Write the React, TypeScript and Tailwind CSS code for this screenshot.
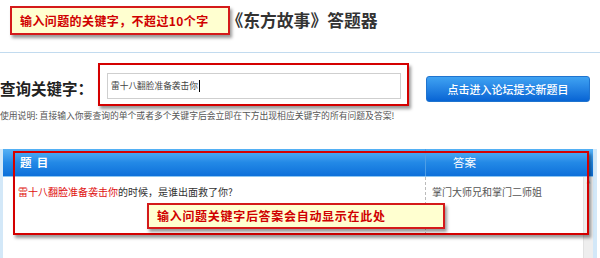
export default function App() {
  return (
    <div className="relative w-[600px] h-[258px] overflow-hidden bg-white font-['Noto_Sans_CJK_SC','Noto_Sans',sans-serif]">
      {/* header */}
      <div className="h-[53px] border-b border-[#c2dbef] flex justify-center pt-[10px] pl-[4px]">
        <div className="text-[16.8px] leading-[20px] font-bold text-[#333]">《东方故事》答题器</div>
      </div>

      {/* search row */}
      <div className="flex mt-[10px] h-[44px]">
        <div className="self-start mt-[16px] w-[98px] text-[15.5px] leading-[18px] font-bold text-[#222]">查询关键字：</div>
        <div className="self-start w-[311px] h-[43px] border-2 border-[#d40000] shadow-[2px_3px_3px_rgba(0,0,0,0.4)] pl-[7px] pt-[8px]">
          <div className="w-[294px] h-[26px] border border-[#cfcfcf] flex items-center pl-[3px]">
            <span className="text-[8.7px] text-[#444]">雷十八翻脸准备袭击你</span>
            <span className="w-px h-[12px] bg-black ml-px"></span>
          </div>
        </div>
        <div className="self-start mt-[13px] ml-[17px] w-[164px] h-[26px] rounded-[3px] bg-gradient-to-b from-[#3fa2f2] to-[#0764d4] border border-[#1f74cf] flex items-center justify-center text-white text-[11px] font-medium">
          点击进入论坛提交新题目
        </div>
      </div>

      <div className="mt-[4px] text-[8.8px] leading-[10px] text-[#555]">
        使用说明: 直接输入你要查询的单个或者多个关键字后会立即在下方出现相应关键字的所有问题及答案!
      </div>

      {/* table */}
      <div className="mt-[28px] w-[597px] h-[110px] border-l-[3px] border-r-[4px] border-[#d3e8f8] flex flex-col">
        <div className="h-[28px] flex text-white bg-gradient-to-b from-[#55b1f5] via-[#2389e6] to-[#0d70da] border-b border-[#8cc6f2]">
          <div className="w-[423px] border-r border-[#4d9ee6] pl-[17px] flex items-center text-[11.5px] font-bold">题&nbsp;&nbsp;目</div>
          <div className="flex-1 pl-[27px] flex items-center text-[11.5px]">答案</div>
        </div>
        <div className="flex-1 flex">
          <div className="flex-1 flex flex-col">
            <div className="h-[58px] flex">
              <div className="w-[423px] border-r border-dashed border-[#bbbbbb] pl-[15px] pt-[9px]">
                <div className="text-[10px] leading-[12px] text-[#333]">
                  <span className="text-[#e01010]">雷十八翻脸准备袭击你</span>的时候，是谁出面救了你?
                </div>
              </div>
              <div className="flex-1 pl-[6px] pt-[9px] text-[10px] leading-[12px] text-[#555]">掌门大师兄和掌门二师姐</div>
            </div>
          </div>
          <div className="w-[10px] bg-[#eeeeee] border-l border-[#e2e2e2] flex justify-center pt-[2px]">
            <span className="text-[8px] leading-[8px] text-[#888]">^</span>
          </div>
        </div>
      </div>

      {/* annotations */}
      <div className="absolute left-[10px] top-[6px] w-[220px] h-[29px] bg-[#ffffd0] border-2 border-[#d41a1a] shadow-[2px_3px_3px_rgba(0,0,0,0.4)] flex items-center pl-[8px]">
        <span className="text-[12px] font-bold text-[#d00000] tracking-[0.4px]">输入问题的关键字，不超过10个字</span>
      </div>
      <div className="absolute left-[13px] top-[151px] w-[576px] h-[84px] border-2 border-[#d40000] shadow-[2px_3px_3px_rgba(0,0,0,0.4)]"></div>
      <div className="absolute left-[147px] top-[203px] w-[298px] h-[26px] bg-[#ffffd0] border-2 border-[#d41a1a] shadow-[2px_3px_3px_rgba(0,0,0,0.4)] flex items-center pl-[8px]">
        <span className="text-[12px] font-bold text-[#d00000] tracking-[0.7px]">输入问题关键字后答案会自动显示在此处</span>
      </div>
    </div>
  );
}
